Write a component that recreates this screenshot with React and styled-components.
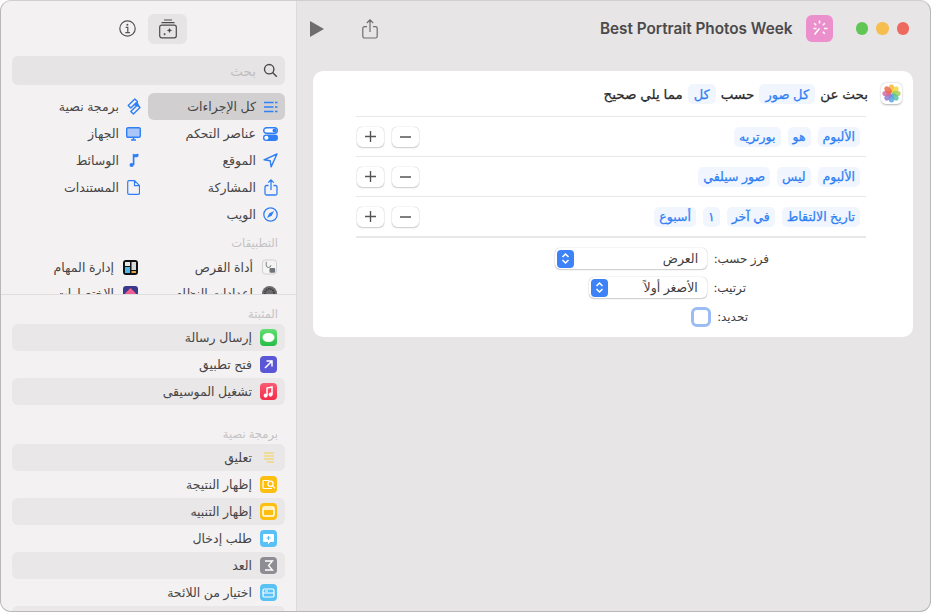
import styled, { createGlobalStyle } from 'styled-components';

const GlobalStyle = createGlobalStyle`
  html, body { margin: 0; padding: 0; background: #fff; }
  body { font-family: Inter, "DejaVu Sans", "Noto Sans", sans-serif; }
  * { box-sizing: border-box; }
`;

const categories = [
  { label: 'كل الإجراءات', icon: 'list', selected: true },
  { label: 'برمجة نصية', icon: 'script' },
  { label: 'عناصر التحكم', icon: 'toggle' },
  { label: 'الجهاز', icon: 'monitor' },
  { label: 'الموقع', icon: 'location' },
  { label: 'الوسائط', icon: 'music' },
  { label: 'المشاركة', icon: 'share' },
  { label: 'المستندات', icon: 'doc' },
  { label: 'الويب', icon: 'compass' },
];

const apps = [
  { label: 'أداة القرص', icon: 'disk' },
  { label: 'إدارة المهام', icon: 'tasks' },
  { label: 'إعدادات النظام', icon: 'settings' },
  { label: 'الاختصارات', icon: 'shortcuts' },
];

const pinned = [
  { label: 'إرسال رسالة', color: 'linear-gradient(#62df72, #27bd47)', glyph: 'bubble' },
  { label: 'فتح تطبيق', color: '#5a56d6', glyph: 'arrow' },
  { label: 'تشغيل الموسيقى', color: 'linear-gradient(#fb5c74, #f32c48)', glyph: 'note' },
];

const scripting = [
  { label: 'تعليق', color: 'transparent', glyph: 'lines' },
  { label: 'إظهار النتيجة', color: '#fdbf0f', glyph: 'result' },
  { label: 'إظهار التنبيه', color: '#fdbf0f', glyph: 'alert' },
  { label: 'طلب إدخال', color: '#5ac1f5', glyph: 'ask' },
  { label: 'العد', color: '#8e8d93', glyph: 'sigma' },
  { label: 'اختيار من اللائحة', color: '#5ac1f5', glyph: 'choose' },
  { label: '', color: 'transparent', glyph: '' },
];

const filters = [
  ['الألبوم', 'هو', 'بورتريه'],
  ['الألبوم', 'ليس', 'صور سيلفي'],
  ['تاريخ الالتقاط', 'في آخر', '١', 'أسبوع'],
];

const Window = styled.div`
  width: 931px;
  height: 612px;
  display: flex;
  overflow: hidden;
  border: 1px solid #b9b8b8;
  border-top-color: #cfcfcd;
  border-radius: 11px;
  background: #e7e5e6;
`;
const Sidebar = styled.aside`
  width: 296px;
  flex: none;
  display: flex;
  flex-direction: column;
  background: #f3f1f2;
  border-right: 1px solid #dcdadb;
  overflow: hidden;
`;
const TopPanel = styled.div`
  height: 294px;
  flex: none;
  overflow: hidden;
  border-bottom: 1px solid #dfddde;
  padding: 0 11px;
`;
const SideToolbar = styled.div`
  height: 55px;
  display: flex;
  align-items: center;
  justify-content: center;
  gap: 1px;
  padding-right: 2px;
`;
const ToolButton = styled.div`
  width: 39px;
  height: 30px;
  border-radius: 6px;
  display: flex;
  align-items: center;
  justify-content: center;
  color: #555354;
  background: ${(p) => (p.$active ? '#e6e4e5' : 'transparent')};
`;
const SearchBox = styled.div`
  height: 29px;
  border-radius: 6px;
  background: #e6e4e5;
  display: flex;
  direction: rtl;
  align-items: center;
  gap: 7px;
  padding: 0 7px;
  font-size: 13.5px;
  color: #c0bebf;
`;
const CategoryGrid = styled.div`
  direction: rtl;
  margin-top: 8px;
  display: grid;
  grid-template-columns: 137px 137px;
  grid-auto-rows: 27px;
`;
const CategoryRow = styled.div`
  display: flex;
  align-items: center;
  gap: 7px;
  padding-right: 7px;
  border-radius: 6px;
  font-size: 12.5px;
  color: #474546;
  background: ${(p) => (p.$selected ? '#d1cfd0' : 'transparent')};
`;
const IconSlot = styled.span`
  width: 15px;
  height: 15px;
  flex: none;
  display: flex;
  align-items: center;
  justify-content: center;
  color: #2f7ff5;
`;
const SectionTitle = styled.div`
  direction: rtl;
  font-size: 11.5px;
  font-weight: 500;
  color: #c4c2c3;
  padding-right: 7px;
  height: 20px;
  line-height: 20px;
`;
const AppsTitle = styled(SectionTitle)`
  margin-top: 5px;
  margin-bottom: 1px;
`;
const AppsGrid = styled.div`
  direction: rtl;
  display: grid;
  grid-template-columns: 139px 135px;
  grid-auto-rows: 26px;
`;
const AppRow = styled.div`
  display: flex;
  align-items: center;
  gap: 9px;
  padding-right: 8px;
  font-size: 12.5px;
  color: #474546;
`;
const BottomPanel = styled.div`
  flex: 1;
  overflow: hidden;
  padding: 9px 11px 0;
`;
const ScriptTitle = styled(SectionTitle)`
  margin-top: 19px;
`;
const ActionRow = styled.div`
  direction: rtl;
  height: 27px;
  display: flex;
  align-items: center;
  gap: 8px;
  padding-right: 8px;
  border-radius: 6px;
  font-size: 12.5px;
  color: #474546;
  background: ${(p) => (p.$shaded ? '#e9e7e8' : 'transparent')};
`;
const ActionIcon = styled.span`
  width: 17px;
  height: 17px;
  flex: none;
  border-radius: 4px;
  background: ${(p) => p.$bg};
  display: flex;
  align-items: center;
  justify-content: center;
`;
const Main = styled.main`
  flex: 1;
  min-width: 0;
  display: flex;
  flex-direction: column;
`;
const TopBar = styled.div`
  height: 55px;
  flex: none;
  display: flex;
  align-items: center;
  padding: 0 21px 0 13px;
  color: #6f6d6e;
`;
const BarIcon = styled.span`
  display: flex;
  justify-content: center;
  margin-right: ${(p) => p.$gap || 0}px;
`;
const Title = styled.div`
  margin-left: auto;
  font-size: 15.3px;
  font-weight: 600;
  color: #4b494a;
`;
const AppBadge = styled.div`
  width: 27px;
  height: 27px;
  margin-left: 13px;
  border-radius: 6px;
  background: #ec8fcd;
  display: flex;
  align-items: center;
  justify-content: center;
`;
const Lights = styled.div`
  display: flex;
  gap: 8px;
  margin-left: 23px;
`;
const Light = styled.span`
  width: 12.5px;
  height: 12.5px;
  border-radius: 50%;
  background: ${(p) => p.$color};
`;
const Card = styled.section`
  direction: rtl;
  margin: 15px 17px 0 16px;
  height: 266px;
  background: #fff;
  border-radius: 10px;
  padding: 0 11px 0 43px;
`;
const HeaderRow = styled.div`
  height: 45px;
  display: flex;
  align-items: center;
  gap: 5px;
  font-size: 13.5px;
  -webkit-text-stroke: 0.25px #2c2a2b;
  color: #2c2a2b;
`;
const PhotosTile = styled.div`
  width: 21px;
  height: 21px;
  margin-left: 8px;
  border-radius: 5px;
  background: #fff;
  box-shadow: 0 0.5px 2px rgba(0, 0, 0, 0.3);
  display: flex;
  align-items: center;
  justify-content: center;
`;
const Token = styled.span`
  height: 20px;
  display: inline-flex;
  align-items: center;
  padding: 0 5px;
  border-radius: 5px;
  background: #f0f5fe;
  color: #2f7ff5;
  font-size: 12.5px;
  -webkit-text-stroke: 0.25px #2f7ff5;
  white-space: nowrap;
`;
const HeaderToken = styled(Token)`
  padding: 0 6px;
  font-size: 13px;
`;
const FilterRow = styled.div`
  margin-right: 36px;
  height: 40px;
  display: flex;
  align-items: center;
  gap: 7px;
  padding: 0 6px 0 1px;
  border-top: 1px solid #e8e8e8;
`;
const FilterButtons = styled.div`
  margin-right: auto;
  display: flex;
  gap: 8px;
`;
const SquareButton = styled.div`
  width: 27px;
  height: 20px;
  border-radius: 5px;
  background: #fff;
  box-shadow: 0 0 1px rgba(0, 0, 0, 0.35), 0 1px 1.5px rgba(0, 0, 0, 0.18);
  display: flex;
  align-items: center;
  justify-content: center;
  color: #555;
`;
const OptionsBlock = styled.div`
  margin-right: 36px;
  border-top: 2px solid #e8e8e8;
  padding-top: 10px;
  display: flex;
  flex-direction: column;
  gap: 8px;
`;
const OptionRow = styled.div`
  height: 21px;
  display: flex;
  align-items: center;
  gap: 7px;
  padding-right: ${(p) => p.$inset}px;
  font-size: 12.5px;
  color: #3f3d3e;
`;
const OptionLabel = styled.span`
  font-size: 12px;
  white-space: nowrap;
`;
const Select = styled.div`
  width: ${(p) => p.$width}px;
  height: 21px;
  border-radius: 5px;
  background: #fff;
  box-shadow: 0 0 1px rgba(0, 0, 0, 0.35), 0 1px 1.5px rgba(0, 0, 0, 0.18);
  display: flex;
  align-items: center;
  justify-content: space-between;
  padding: 0 9px 0 2px;
  color: #3f3d3e;
`;
const SelectStepper = styled.span`
  width: 17px;
  height: 18px;
  border-radius: 4px;
  background: #3d82f6;
  display: flex;
  align-items: center;
  justify-content: center;
`;
const CheckBox = styled.span`
  width: 20px;
  height: 20px;
  border-radius: 6px;
  background: #fff;
  border: 3px solid #9dbcf4;
`;

function CategoryIcon({ name }) {
  if (name === 'list') {
    return (
      <svg width="15" height="12" viewBox="0 0 15 12" fill="none" stroke="currentColor" strokeWidth="1.5">
        <path d="M1 1.5h9.5M1 6h9.5M1 10.5h9.5M12 1.5h2.5M12 6h2.5M12 10.5h2.5" />
      </svg>
    );
  }
  if (name === 'toggle') {
    return (
      <svg width="15" height="14" viewBox="0 0 15 14">
        <rect x="0.7" y="0.7" width="13.6" height="5.6" rx="2.8" fill="#fff" stroke="currentColor" strokeWidth="1.4" />
        <circle cx="11.5" cy="3.5" r="2" fill="currentColor" />
        <rect x="0" y="7.6" width="15" height="6.4" rx="3.2" fill="currentColor" />
        <circle cx="3.4" cy="10.8" r="2" fill="#fff" />
      </svg>
    );
  }
  if (name === 'monitor') {
    return (
      <svg width="15" height="14" viewBox="0 0 15 14">
        <rect x="0.7" y="0.7" width="13.6" height="9.6" rx="1.4" fill="#a9c6f7" stroke="currentColor" strokeWidth="1.4" />
        <path d="M5 13h5M7.5 10.5V13" stroke="currentColor" strokeWidth="1.6" />
      </svg>
    );
  }
  if (name === 'location') {
    return (
      <svg width="15" height="15" viewBox="0 0 15 15" fill="none" stroke="currentColor" strokeWidth="1.4" strokeLinejoin="round">
        <path d="M14 1 1 6.8l6.2.9.9 6.2z" />
      </svg>
    );
  }
  if (name === 'music') {
    return (
      <svg width="12" height="15" viewBox="0 0 12 15" fill="none" stroke="currentColor">
        <path d="M5.6 12V2.2C7 3.2 8.6 2.6 10 1.2" strokeWidth="1.7" />
        <circle cx="3.6" cy="12" r="2.1" fill="currentColor" strokeWidth="0" />
        <path d="M5.6 1.2h4.8v2.2c-1.6 1-3.4 1.2-4.8.6z" fill="currentColor" strokeWidth="0" />
      </svg>
    );
  }
  if (name === 'share') {
    return (
      <svg width="14" height="17" viewBox="0 0 14 17" fill="none" stroke="currentColor" strokeWidth="1.3">
        <path d="M4.5 6.5H2.5A1.5 1.5 0 0 0 1 8v6.5A1.5 1.5 0 0 0 2.5 16h9a1.5 1.5 0 0 0 1.5-1.5V8a1.5 1.5 0 0 0-1.5-1.5h-2M7 11V1M4.2 3.6 7 .9l2.8 2.7" />
      </svg>
    );
  }
  if (name === 'doc') {
    return (
      <svg width="13" height="15" viewBox="0 0 13 15" fill="none" stroke="currentColor" strokeWidth="1.2">
        <path d="M2 .7h5.5l5 5V13a1.4 1.4 0 0 1-1.4 1.4H2A1.4 1.4 0 0 1 .7 13V2A1.4 1.4 0 0 1 2 .7zM7.5.7v5h5" />
      </svg>
    );
  }
  if (name === 'compass') {
    return (
      <svg width="15" height="15" viewBox="0 0 15 15">
        <circle cx="7.5" cy="7.5" r="6.7" fill="none" stroke="currentColor" strokeWidth="1.3" />
        <path d="M11 4 8.7 8.7 4 11l2.3-4.7z" fill="currentColor" />
      </svg>
    );
  }
  return (
    <svg width="14" height="17" viewBox="0 0 14 17" fill="none" stroke="currentColor" strokeWidth="1.4" strokeLinejoin="round">
      <path d="M7.8 1 1.2 7.4l2.6 2.6 6.6-6.4zM6.4 16l6.6-6.4-2.6-2.6-6.6 6.4z" />
      <path d="M3.8 10l6.6-6.4 2.6 5.9L6.4 7z" fill="currentColor" strokeWidth="0" />
    </svg>
  );
}

function AppGlyph({ name }) {
  if (name === 'disk') {
    return (
      <svg width="16" height="16" viewBox="0 0 16 16">
        <rect x="0.5" y="0.5" width="15" height="15" rx="3" fill="#f4f4f4" stroke="#cfcfcf" />
        <path d="M4.5 2.5v3.5a2.5 2.5 0 0 0 5 0" fill="none" stroke="#777" strokeWidth="1" />
        <rect x="8" y="9" width="6" height="5" rx="1" fill="#70757c" />
      </svg>
    );
  }
  if (name === 'tasks') {
    return (
      <svg width="15" height="15" viewBox="0 0 15 15">
        <rect width="15" height="15" rx="3" fill="#111" />
        <rect x="2" y="2" width="5" height="4" fill="#e8e8e8" />
        <rect x="8.5" y="2" width="4.5" height="8" fill="#d8d8d8" />
        <rect x="2" y="7" width="5" height="6" fill="#53b7e8" />
        <rect x="8.5" y="11" width="4.5" height="2" fill="#e2a53d" />
      </svg>
    );
  }
  if (name === 'settings') {
    return (
      <svg width="15" height="15" viewBox="0 0 15 15">
        <circle cx="7.5" cy="7.5" r="7.5" fill="#6b6b6d" />
        <circle cx="7.5" cy="7.5" r="4.6" fill="none" stroke="#2f2f31" strokeWidth="1.6" strokeDasharray="1.2 1" />
      </svg>
    );
  }
  return (
    <svg width="15" height="15" viewBox="0 0 15 15">
      <rect width="15" height="15" rx="3" fill="#3a3a8c" />
      <path d="M7.5 2 13 7.5 7.5 13 2 7.5z" fill="#ef5f8f" />
    </svg>
  );
}

function ActionGlyph({ name }) {
  const stroke = { fill: 'none', stroke: '#fff', strokeWidth: 1.5 };
  if (name === 'bubble') return <svg width="13" height="12" viewBox="0 0 13 12"><ellipse cx="6.5" cy="5.5" rx="6" ry="4.6" fill="#fff" /></svg>;
  if (name === 'arrow') return <svg width="11" height="11" viewBox="0 0 11 11" {...stroke}><path d="M2 9l7-7M3.5 2H9v5.5" /></svg>;
  if (name === 'note') return <svg width="11" height="12" viewBox="0 0 11 12" {...stroke}><path d="M4 9.5V2l5-1v7.5" /><circle cx="2.6" cy="9.6" r="1.3" fill="#fff" /><circle cx="7.6" cy="8.6" r="1.3" fill="#fff" /></svg>;
  if (name === 'lines') return <svg width="12" height="11" viewBox="0 0 12 11" fill="none" stroke="#f7d24a" strokeWidth="1.2"><path d="M1 1h10M1 4h10M1 7h10M4 10h7" /></svg>;
  if (name === 'result') return <svg width="14" height="11" viewBox="0 0 14 11" {...stroke} strokeWidth="1.2"><path d="M7 1.5H2A1 1 0 0 0 1 2.5v6a1 1 0 0 0 1 1h8" /><circle cx="8.5" cy="4.8" r="2.6" /><path d="M10.5 6.8 13 9.3" /></svg>;
  if (name === 'alert') return <svg width="13" height="11" viewBox="0 0 13 11" {...stroke}><rect x="1" y="1" width="11" height="9" rx="1.5" /><path d="M1 3h11" /></svg>;
  if (name === 'ask') return <svg width="13" height="12" viewBox="0 0 13 12"><path d="M2 1h9a1 1 0 0 1 1 1v6a1 1 0 0 1-1 1H8l-2 2.5V9H2a1 1 0 0 1-1-1V2a1 1 0 0 1 1-1z" fill="#fff" /><path d="M6.5 3v4M4.5 5h4" stroke="#5ac1f5" strokeWidth="1.2" /></svg>;
  if (name === 'sigma') return <svg width="10" height="11" viewBox="0 0 10 11" {...stroke} strokeWidth="1.3"><path d="M1 1h7.5L4.5 5.5 8.5 10H1" /></svg>;
  if (name === 'choose') return <svg width="13" height="10" viewBox="0 0 13 10" {...stroke} strokeWidth="1.2"><rect x="1" y="1" width="11" height="8" rx="1.5" /><path d="M1 5h11M3 3h3" /></svg>;
  return null;
}

function PhotosIcon() {
  const petals = ['#f5b73c', '#f4d640', '#a4cf52', '#58c4a0', '#5aa6e6', '#8d7fd6', '#d26aa4', '#ec6a52'];
  return (
    <svg width="19" height="19" viewBox="0 0 20 20">
      {petals.map((c, i) => (
        <ellipse key={c} cx="10" cy="5" rx="3" ry="4.6" fill={c} opacity="0.85" transform={`rotate(${i * 45} 10 10)`} />
      ))}
    </svg>
  );
}

function StepperGlyph() {
  return (
    <svg width="9" height="13" viewBox="0 0 9 13" fill="none" stroke="#fff" strokeWidth="1.5">
      <path d="M1.5 5 4.5 2l3 3M1.5 8l3 3 3-3" />
    </svg>
  );
}

function ActionList({ items }) {
  return items.map((item, i) => (
    <ActionRow key={item.label || i} $shaded={i % 2 === 0}>
      {item.glyph && (
        <ActionIcon $bg={item.color}>
          <ActionGlyph name={item.glyph} />
        </ActionIcon>
      )}
      {item.label}
    </ActionRow>
  ));
}

export default function App() {
  return (
    <Window>
      <GlobalStyle />
      <Sidebar>
        <TopPanel>
          <SideToolbar>
            <ToolButton>
              <svg width="17" height="17" viewBox="0 0 17 17" fill="none" stroke="currentColor">
                <circle cx="8.5" cy="8.5" r="7.7" strokeWidth="1.2" />
                <path d="M6.6 7.4h2.2v5M6.3 12.6h4.6" strokeWidth="1.2" />
                <circle cx="8.4" cy="4.8" r="1" fill="currentColor" stroke="none" />
              </svg>
            </ToolButton>
            <ToolButton $active>
              <svg width="18" height="20" viewBox="0 0 18 20" fill="none" stroke="#4c4a4b" strokeWidth="1.2">
                <path d="M5 1h8M2.5 3.6h13" />
                <rect x="0.7" y="6.2" width="16.6" height="12.6" rx="2" />
                <path d="M10.5 8.6c.3 1.9 1 2.6 2.9 2.9-1.9.3-2.6 1-2.9 2.9-.3-1.9-1-2.6-2.9-2.9 1.9-.3 2.6-1 2.9-2.9z" fill="#4c4a4b" stroke="none" />
                <path d="M5.6 14.2v2M4.6 15.2h2" strokeWidth="0.9" />
              </svg>
            </ToolButton>
          </SideToolbar>
          <SearchBox>
            <svg width="15" height="15" viewBox="0 0 15 15" fill="none" stroke="#4a4849" strokeWidth="1.4">
              <circle cx="6.2" cy="6.2" r="4.7" />
              <path d="M9.6 9.6l4.2 4.2" />
            </svg>
            بحث
          </SearchBox>
          <CategoryGrid>
            {categories.map((c) => (
              <CategoryRow key={c.label} $selected={c.selected}>
                <IconSlot>
                  <CategoryIcon name={c.icon} />
                </IconSlot>
                {c.label}
              </CategoryRow>
            ))}
          </CategoryGrid>
          <AppsTitle>التطبيقات</AppsTitle>
          <AppsGrid>
            {apps.map((a) => (
              <AppRow key={a.label}>
                <IconSlot>
                  <AppGlyph name={a.icon} />
                </IconSlot>
                {a.label}
              </AppRow>
            ))}
          </AppsGrid>
        </TopPanel>
        <BottomPanel>
          <SectionTitle>المثبتة</SectionTitle>
          <ActionList items={pinned} />
          <ScriptTitle>برمجة نصية</ScriptTitle>
          <ActionList items={scripting} />
        </BottomPanel>
      </Sidebar>
      <Main>
        <TopBar>
          <BarIcon $gap={38}>
            <svg width="14" height="16" viewBox="0 0 14 16"><path d="M0 0l14 8-14 8z" fill="currentColor" /></svg>
          </BarIcon>
          <BarIcon>
            <svg width="16" height="20" viewBox="0 0 16 20" fill="none" stroke="currentColor" strokeWidth="1.2">
              <path d="M5 7.6H2.6A1.8 1.8 0 0 0 .8 9.4v7.8A1.8 1.8 0 0 0 2.6 19h10.8a1.8 1.8 0 0 0 1.8-1.8V9.4a1.8 1.8 0 0 0-1.8-1.8H11M8 13V1M4.8 4 8 .9 11.2 4" />
            </svg>
          </BarIcon>
          <Title>Best Portrait Photos Week</Title>
          <AppBadge>
            <svg width="19" height="19" viewBox="0 0 19 19" fill="none" stroke="#fff" strokeWidth="1.5">
              <path d="M9.5 1.5v3M3.5 9.5h3M14 9.5h3.5M4.2 4.2l2 2M12.8 12.8l2 2M14.8 4.2l-2 2M9.5 9.5l-5 6" />
            </svg>
          </AppBadge>
          <Lights>
            <Light $color="#62c655" />
            <Light $color="#f6bd4f" />
            <Light $color="#ee6a5f" />
          </Lights>
        </TopBar>
        <Card>
          <HeaderRow>
            <PhotosTile>
              <PhotosIcon />
            </PhotosTile>
            بحث عن
            <HeaderToken>كل صور</HeaderToken>
            حسب
            <HeaderToken>كل</HeaderToken>
            مما يلي صحيح
          </HeaderRow>
          {filters.map((tokens) => (
            <FilterRow key={tokens.join()}>
              {tokens.map((t) => (
                <Token key={t}>{t}</Token>
              ))}
              <FilterButtons>
                <SquareButton>
                  <svg width="11" height="2" viewBox="0 0 11 2"><path d="M0 1h11" stroke="currentColor" strokeWidth="1.4" /></svg>
                </SquareButton>
                <SquareButton>
                  <svg width="11" height="11" viewBox="0 0 11 11"><path d="M0 5.5h11M5.5 0v11" stroke="currentColor" strokeWidth="1.4" /></svg>
                </SquareButton>
              </FilterButtons>
            </FilterRow>
          ))}
          <OptionsBlock>
            <OptionRow $inset={97}>
              <OptionLabel>فرز حسب:</OptionLabel>
              <Select $width={152}>
                العرض
                <SelectStepper><StepperGlyph /></SelectStepper>
              </Select>
            </OptionRow>
            <OptionRow $inset={120}>
              <OptionLabel>ترتيب:</OptionLabel>
              <Select $width={118}>
                الأصغر أولاً
                <SelectStepper><StepperGlyph /></SelectStepper>
              </Select>
            </OptionRow>
            <OptionRow $inset={118}>
              <OptionLabel>تحديد:</OptionLabel>
              <CheckBox />
            </OptionRow>
          </OptionsBlock>
        </Card>
      </Main>
    </Window>
  );
}
